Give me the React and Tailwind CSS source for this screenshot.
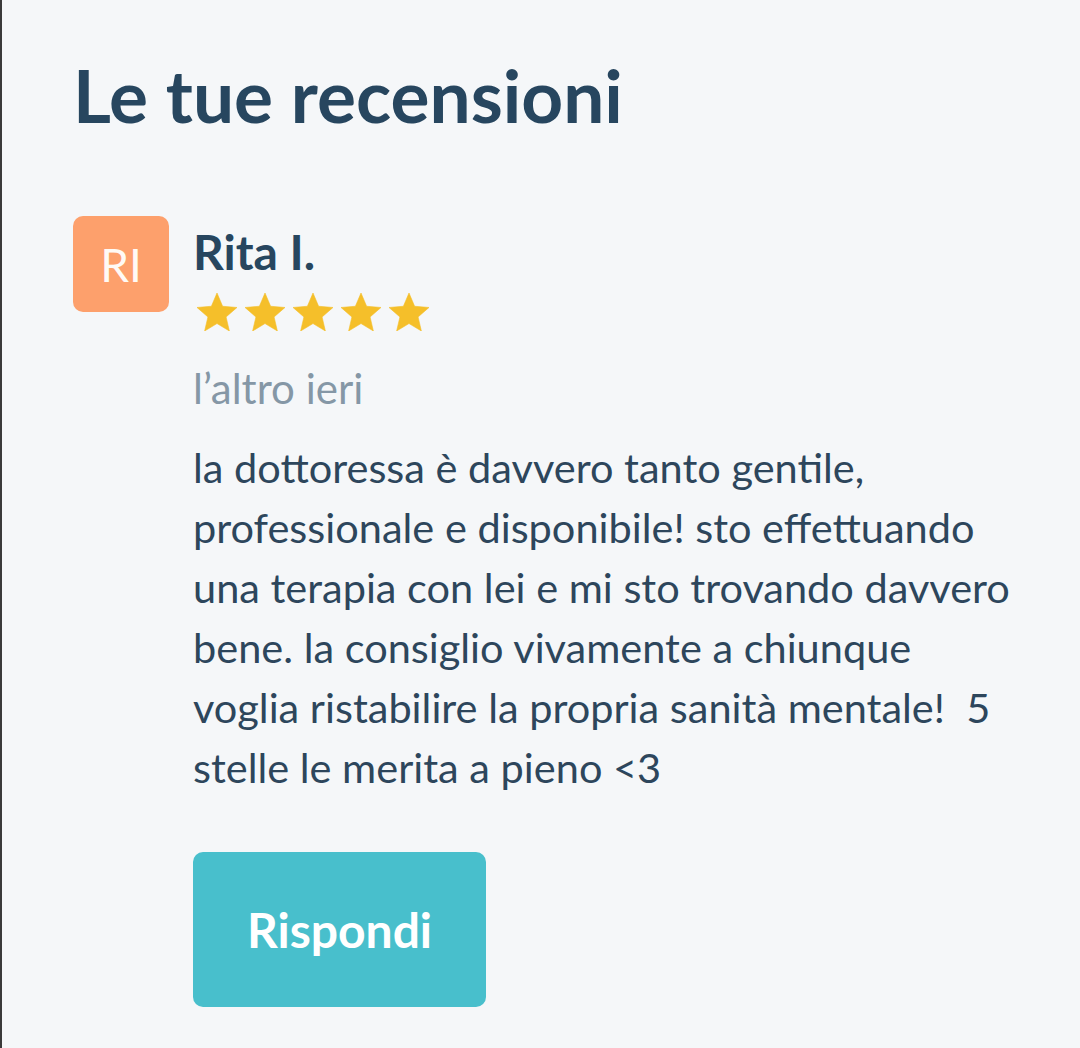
const Star = () => (
  <svg viewBox="0 2 24 19" className="h-[38px] w-[48px]" fill="#f5bf2a">
    <path
      d="M12 17.27L18.18 21l-1.64-7.03L22 9.24l-7.19-.61L12 2 9.19 8.63 2 9.24l5.46 4.73L5.82 21z"
      stroke="#f5bf2a"
      strokeWidth="0.3"
      strokeLinejoin="round"
    />
  </svg>
);

const lines = [
  'la dottoressa è davvero tanto gentile,',
  'professionale e disponibile! sto effettuando',
  'una terapia con lei e mi sto trovando davvero',
  'bene. la consiglio vivamente a chiunque',
  'voglia ristabilire la propria sanità mentale!  5',
  'stelle le merita a pieno <3',
];

export default function App() {
  return (
    <div className="min-h-[1048px] w-[1080px] border-l-2 border-[#3a3a3a] bg-[#f5f7f9] font-['Lato','Liberation_Sans',sans-serif]">
      <div className="px-[71px] pt-[51px]">
        <h1 className="text-[73px] font-bold leading-[88px] text-[#27465f]">Le tue recensioni</h1>

        <div className="mt-[77px] flex gap-[24px]">
          <div className="flex h-[96px] w-[96px] shrink-0 items-center justify-center rounded-[10px] bg-[#fda06c] text-[46px] text-[#fffaf5]">
            RI
          </div>
          <div className="flex flex-col pt-[6px]">
            <div className="text-[48px] font-bold leading-[60px] text-[#27465f]">Rita I.</div>
            <div className="mt-[11px] flex">
              <Star />
              <Star />
              <Star />
              <Star />
              <Star />
            </div>
            <div className="mt-[33px] text-[42px] leading-[48px] text-[#8597a6]">l’altro ieri</div>
            <p className="mt-[25px] whitespace-pre text-[41.5px] leading-[60px] text-[#2d465c]">
              {lines.join('\n')}
            </p>
            <button className="mt-[55px] h-[155px] w-[293px] rounded-[10px] bg-[#48bfcc] text-[48px] font-bold text-white">
              Rispondi
            </button>
          </div>
        </div>
      </div>
    </div>
  );
}
